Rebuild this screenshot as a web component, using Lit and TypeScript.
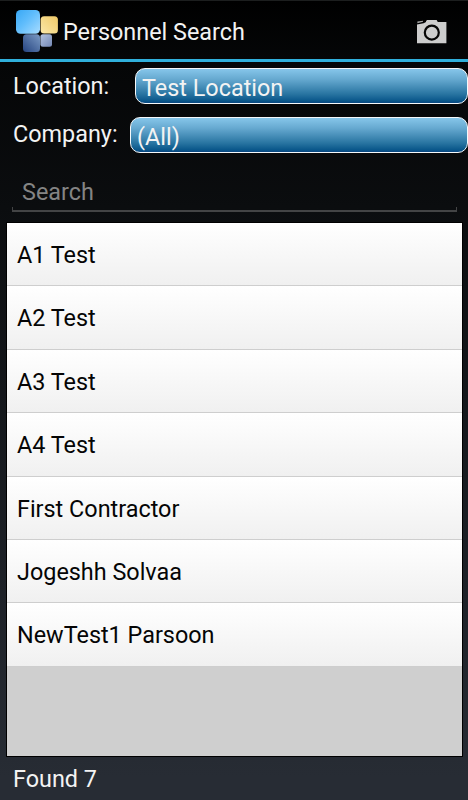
import { LitElement, html, css } from "lit";
import { customElement, state } from "lit/decorators.js";

@customElement("app-root")
export class AppRoot extends LitElement {
  @state() private people = [
    "A1 Test",
    "A2 Test",
    "A3 Test",
    "A4 Test",
    "First Contractor",
    "Jogeshh Solvaa",
    "NewTest1 Parsoon",
  ];

  static styles = css`
    :host {
      display: flex;
      flex-direction: column;
      box-sizing: border-box;
      width: 468px;
      height: 800px;
      overflow: hidden;
      font-family: Roboto, sans-serif;
      font-size: 23.4px;
      line-height: 28px;
      color: #f3f3f3;
      background: linear-gradient(#000 0, #050607 8%, #0b0d0f 26%, #272c34 97%);
      white-space: nowrap;
    }
    header {
      display: flex;
      align-items: center;
      box-sizing: border-box;
      flex: none;
      height: 62px;
      padding: 2px 20px 0 15px;
      border-top: 1px solid #1c1e1e;
      border-bottom: 3px solid #30b0dc;
      background: linear-gradient(#000, #050607);
    }
    .logo {
      flex: none;
      width: 44px;
      height: 44px;
      margin-right: 4px;
    }
    .title {
      flex: 1;
      padding-top: 2px;
    }
    .camera {
      width: 31px;
      height: 26px;
      margin-right: 1px;
      margin-bottom: 1px;
    }
    .field {
      display: flex;
      flex: none;
      height: 36px;
      padding-left: 13px;
    }
    .location {
      margin-top: 6px;
    }
    .company {
      margin-top: 13px;
    }
    .label {
      flex: none;
      width: 122px;
      padding-top: 4px;
    }
    .company .label {
      width: 117px;
      padding-top: 3px;
    }
    .select {
      flex: 1;
      box-sizing: border-box;
      padding: 5px 6px 0;
      border: 1.5px solid #f5f8fa;
      border-radius: 10px;
      background: linear-gradient(#86c6ea, #66a9d0 30%, #2874a1 74%, #09568a 94%, #0a4680);
    }
    .search {
      flex: none;
      box-sizing: border-box;
      height: 35px;
      margin: 24px 11px 0 12px;
      padding: 1px 10px 0;
      color: #848484;
      background:
        linear-gradient(#434445, #434445) left bottom / 1px 5px no-repeat,
        linear-gradient(#434445, #434445) right bottom / 1px 5px no-repeat,
        linear-gradient(#434445, #434445) left bottom / 100% 2px no-repeat;
    }
    .list {
      flex: none;
      box-sizing: border-box;
      height: 535px;
      margin: 10px 5px 0 6px;
      border: 1px solid #000;
      background: #cfcfcf;
      color: #050505;
    }
    .row {
      box-sizing: border-box;
      height: 63.4px;
      padding: 18px 10px 0;
      border-bottom: 1px solid #cecece;
      background: linear-gradient(#fff, #f0f0f0);
    }
    footer {
      padding: 8px 13px 0;
    }
  `;

  render() {
    return html`
      <header>
        <svg class="logo" viewBox="0 0 44 44">
          <defs>
            <linearGradient id="blue" x1="0" y1="0" x2="1" y2="1">
              <stop offset="0" stop-color="#38a8f5" />
              <stop offset=".45" stop-color="#60bdfc" />
              <stop offset="1" stop-color="#a8dcff" />
            </linearGradient>
            <linearGradient id="gold" x1="0" y1="1" x2="1" y2="0">
              <stop offset="0" stop-color="#fbe8a8" />
              <stop offset="1" stop-color="#efc968" />
            </linearGradient>
            <linearGradient id="navy" x1="0" y1="1" x2="1" y2="0">
              <stop offset="0" stop-color="#25437f" />
              <stop offset="1" stop-color="#7b9bc5" />
            </linearGradient>
            <linearGradient id="pale" x1="0" y1="0" x2="1" y2="1">
              <stop offset="0" stop-color="#b4c4e0" />
              <stop offset="1" stop-color="#7488b5" />
            </linearGradient>
          </defs>
          <rect x="1" y="1" width="24" height="23.8" rx="4.5" fill="url(#blue)" />
          <rect x="25.6" y="7.3" width="17.3" height="17.3" rx="3.5" fill="url(#gold)" />
          <rect x="8" y="25.3" width="17" height="17.7" rx="3.5" fill="url(#navy)" />
          <rect x="25.4" y="25.3" width="11.6" height="12.4" rx="2.5" fill="url(#pale)" />
        </svg>
        <div class="title">Personnel Search</div>
        <svg class="camera" viewBox="0 0 31 26">
          <path d="M1 6.6 7.6 5.2 10 4V3.2L11 2h9.6l1.2 2h8.6v21.2H1Z" fill="#cdcdcd" />
          <path d="M1.4 3.6 7 2.8v1L1.4 5.2Z" fill="#a8a8a8" />
          <circle cx="15.8" cy="14.6" r="7" fill="none" stroke="#050505" stroke-width="2.2" />
        </svg>
      </header>
      <div class="field location">
        <div class="label">Location:</div>
        <div class="select">Test Location</div>
      </div>
      <div class="field company">
        <div class="label">Company:</div>
        <div class="select">(All)</div>
      </div>
      <div class="search">Search</div>
      <div class="list">${this.people.map((name) => html`<div class="row">${name}</div>`)}</div>
      <footer>Found ${this.people.length}</footer>
    `;
  }
}
